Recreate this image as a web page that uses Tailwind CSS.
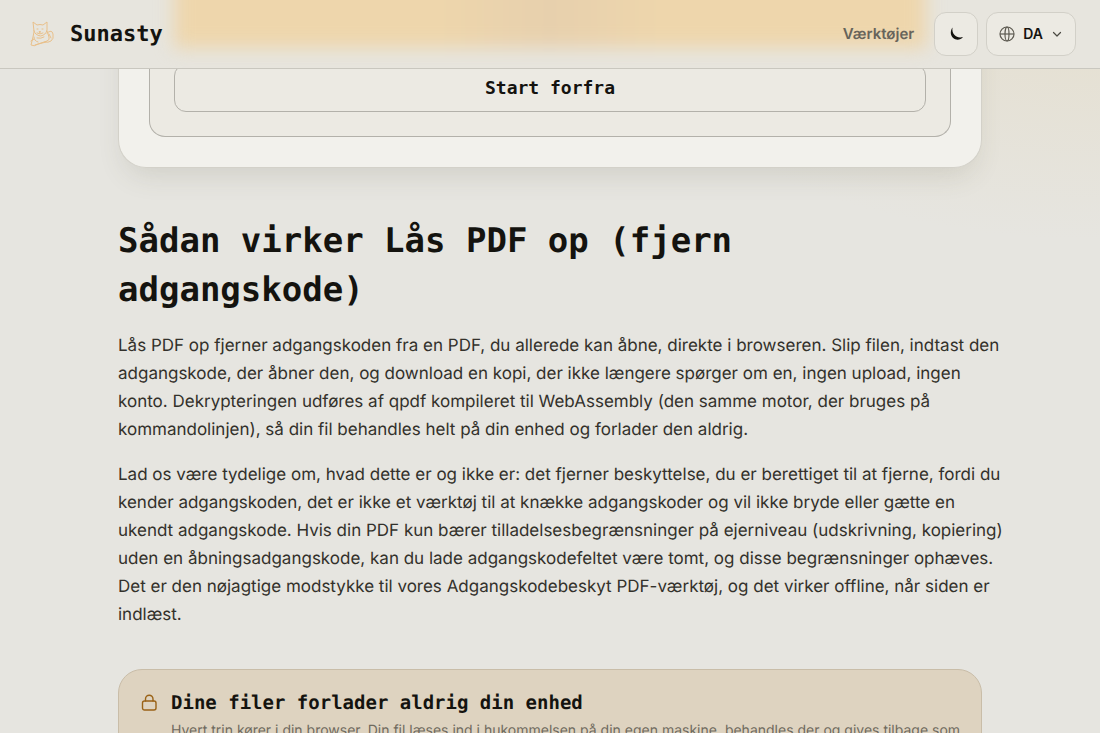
<!DOCTYPE html>
<html lang="da">

<head>
  <meta charset="UTF-8">
  <meta name="viewport" content="width=device-width, initial-scale=1.0">
  <title>Lås PDF op - Sunasty</title>
  <script src="https://cdn.jsdelivr.net/npm/@tailwindcss/browser@4"></script>
</head>

<body class="bg-[#e6e5e0] bg-[radial-gradient(ellipse_480px_240px_at_100%_0%,#e5dfcf_0%,#e6e5e0_100%)] bg-no-repeat font-['Inter',sans-serif] text-[#14130f] overflow-x-hidden [text-rendering:geometricPrecision]">
  <!-- NavBar -->
  <header class="fixed inset-x-0 top-0 z-10 overflow-hidden border-b border-[#c9c7bf] bg-[#e7e5de]">
    <!-- Warm glow behind the bar -->
    <div class="absolute inset-x-0 -top-12 mx-auto h-24 max-w-[752px] bg-linear-to-r from-[#eed6ac] from-35% via-[#e7d0ad] to-[#eed6ac] to-65% blur-[9px]"></div>
    <nav class="relative flex h-17 items-center justify-between px-6">
      <a href="#" class="flex items-center gap-3">
        <svg class="h-[34px] w-[34px]" viewBox="0 0 34 34" fill="none" stroke="#e9c08a" stroke-width="1" stroke-linecap="round" stroke-linejoin="round">
          <path d="M10 14 9 5l4 3q3-1 6 0l4-3 0 8q-1 5-6.500 6Q11 18 10 14Z" />
          <path d="M13 12h1M18 12h1M15.500 14.500h1l-.5 1ZM13 16q3 2 6 0M10 15l-1 5-2 8q3 2 7-1l9-3q3-1 2-4l-2-6" />
          <path d="M10 20q0 4 4 5M7 24l3-2M23 16q5-4 6 1t-2 7q-3 2-6 1M25 17l2 4M13 21q4 1 7-1M11 28l11-3" />
        </svg>
        <span class="font-['DejaVu_Sans_Mono',monospace] text-[22px] font-bold">Sunasty</span>
      </a>

      <div class="flex items-center gap-2">
        <a href="#" class="mr-3 text-[15px] font-semibold text-[#67645b]">Værktøjer</a>
        <button type="button" aria-label="Mørkt tema" class="flex h-11 w-11 items-center justify-center rounded-xl border border-[#d2d0c8] bg-[#eceae3]">
          <svg class="h-4 w-4" viewBox="0 0 16 16" fill="#14130f">
            <path d="M4.500 1.500C2 5 2.300 9.500 5.200 12 8 14.500 12.500 14.200 15 11 11.500 12 8.500 11.200 6.500 9 4.700 7 4 4.500 4.500 1.500Z" />
          </svg>
        </button>
        <button type="button" class="flex h-11 items-center gap-2 rounded-xl border border-[#d2d0c8] bg-[#eceae3] px-3 text-sm font-semibold">
          <svg class="h-4 w-4" viewBox="0 0 16 16" fill="none" stroke="#5d5a51" stroke-width="1.200">
            <circle cx="8" cy="8" r="7" />
            <ellipse cx="8" cy="8" rx="2" ry="7" />
            <path d="M1 8h14" />
          </svg>
          DA
          <svg class="h-3 w-3" viewBox="0 0 12 12" fill="none" stroke="#4b4942" stroke-width="1.200" stroke-linecap="round" stroke-linejoin="round">
            <path d="m2.500 4.500 3.500 3.500 3.500-3.500" />
          </svg>
        </button>
      </div>
    </nav>
  </header>

  <main class="mx-auto max-w-[912px] px-6">
    <!-- Tool card -->
    <section class="rounded-b-[28px] border border-t-0 border-[#d3d1c9] bg-[#f2f1ec] px-[30px] pb-[30px] shadow-[0_14px_28px_-8px_rgba(90,85,60,0.16)]">
      <div class="rounded-b-2xl border border-t-0 border-[#b3b1aa] bg-[#eceae3] px-6 pt-16 pb-6">
        <button type="button" class="block h-12 w-full rounded-xl border border-[#b3b1aa] font-['DejaVu_Sans_Mono',monospace] text-lg font-bold">Start forfra</button>
      </div>
    </section>

    <!-- How it works -->
    <section class="pt-[49px]">
      <h2 class="font-['DejaVu_Sans_Mono',monospace] text-[34px] leading-[49px] font-bold">Sådan virker Lås PDF op (fjern adgangskode)</h2>
      <div class="mt-[17px] -mr-[22px] space-y-[17px] text-[17px] leading-7 text-[#33312b]">
        <p>Lås PDF op fjerner adgangskoden fra en PDF, du allerede kan åbne, direkte i browseren. Slip filen, indtast den adgangskode, der åbner den, og download en kopi, der ikke længere spørger om en, ingen upload, ingen konto. Dekrypteringen udføres af qpdf kompileret til WebAssembly (den samme motor, der bruges på kommandolinjen), så din fil behandles helt på din enhed og forlader den aldrig.</p>
        <p>Lad os være tydelige om, hvad dette er og ikke er: det fjerner beskyttelse, du er berettiget til at fjerne, fordi du kender adgangskoden, det er ikke et værktøj til at knække adgangskoder og vil ikke bryde eller gætte en ukendt adgangskode. Hvis din PDF kun bærer tilladelsesbegrænsninger på ejerniveau (udskrivning, kopiering) uden en åbningsadgangskode, kan du lade adgangskodefeltet være tomt, og disse begrænsninger ophæves. Det er den nøjagtige modstykke til vores Adgangskodebeskyt PDF-værktøj, og det virker offline, når siden er indlæst.</p>
      </div>
    </section>

    <!-- Privacy note -->
    <section class="mt-10 flex gap-3 rounded-3xl border border-[#c9bda8] bg-[#ded3c0] py-5 pr-3 pl-[22px]">
      <svg class="mt-1 h-[18px] w-[18px] shrink-0" viewBox="0 0 18 18" fill="none" stroke="#9a6216" stroke-width="1.400" stroke-linecap="round" stroke-linejoin="round">
        <rect x="1.500" y="7" width="13.500" height="9" rx="2" />
        <path d="M4.500 7V5a3.750 3.750 0 0 1 7.500 0v2" />
      </svg>
      <div>
        <h3 class="font-['DejaVu_Sans_Mono',monospace] text-[19px] leading-[26px] font-bold">Dine filer forlader aldrig din enhed</h3>
        <p class="mt-1 text-sm leading-[22px] text-[#6f6a5e]">Hvert trin kører i din browser. Din fil læses ind i hukommelsen på din egen maskine, behandles der og gives tilbage som en ny fil.</p>
      </div>
    </section>
  </main>
</body>

</html>
